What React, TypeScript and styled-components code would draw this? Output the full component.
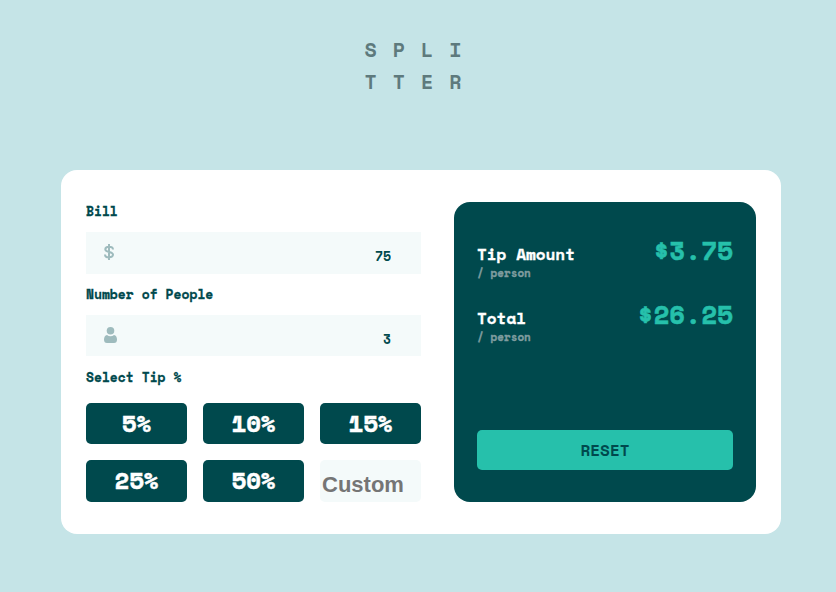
import React, { useState } from "react";
import styled, { createGlobalStyle, css } from "styled-components";

const dark = "#00494d";
const accent = "#26c0ab";
const pale = "#f4fafa";
const mono = '"Space Mono", "DejaVu Sans Mono", monospace';

const heavy = css`
  -webkit-text-stroke: 0.02em currentColor;
`;

const GlobalStyle = createGlobalStyle`
  * { box-sizing: border-box; }
  body {
    margin: 0;
    background: #c5e4e7;
    font-family: ${mono};
    font-weight: 700;
    color: ${dark};
  }
  button, input { font: inherit; }
`;

const Page = styled.div`
  display: flex;
  flex-direction: column;
  align-items: center;
  min-height: 100vh;
  padding: 34px 55px 58px 61px;
`;

const Title = styled.h1`
  margin: 0 0 72px;
  font-size: 20px;
  line-height: 32px;
  letter-spacing: 16px;
  color: #5e7a7d;
`;

const Card = styled.main`
  display: grid;
  grid-template-columns: 335fr 302fr;
  gap: 33px;
  width: 100%;
  max-width: 720px;
  padding: 32px 25px;
  background: #fff;
  border-radius: 16px;
`;

const Form = styled.form`
  display: grid;
  grid-template-rows: 19px 42px 19px 41px 21px auto;
  gap: 11px;
  min-width: 0;
`;

const Label = styled.label`
  align-self: center;
  font-size: 13px;
  line-height: 19px;
  ${heavy}
`;

const Field = styled.div`
  display: flex;
  align-items: center;
  padding: 0 30px 0 18px;
  background: ${pale};

  svg { margin-bottom: 2px; }
`;

const FieldInput = styled.input`
  flex: 1;
  align-self: stretch;
  min-width: 0;
  padding: 6px 0 0;
  border: 0;
  background: none;
  color: ${dark};
  font-size: 13px;
  text-align: right;
  outline: none;
`;

const Options = styled.div`
  display: grid;
  grid-template-columns: repeat(3, minmax(0, 1fr));
  grid-template-rows: 41px 42px;
  gap: 16px;
  margin-top: 4px;
`;

const TipButton = styled.button`
  padding: 0 0 2px;
  border: 0;
  border-radius: 5px;
  background: ${dark};
  color: #fff;
  font-size: 24px;
  line-height: 36px;
  cursor: pointer;
  ${heavy}
`;

const CustomInput = styled.input`
  min-width: 0;
  padding: 8px 2px 0;
  border: 0;
  border-radius: 5px;
  background: ${pale};
  color: ${dark};
  font-family: "Liberation Sans", Arial, sans-serif;
  font-size: 22px;
  outline: none;
  &::placeholder { color: #757575; opacity: 1; }
`;

const Panel = styled.section`
  display: flex;
  flex-direction: column;
  gap: 24px;
  min-width: 0;
  padding: 34px 23px 32px;
  border-radius: 16px;
  background: ${dark};
`;

const ResultRow = styled.div`
  display: flex;
  justify-content: space-between;
  height: 40px;
`;

const ResultName = styled.div`
  padding-top: 7px;
  color: #fff;
  font-size: 16px;
  line-height: 22px;
  ${heavy}
`;

const PerPerson = styled.small`
  display: block;
  color: #7f9c9f;
  font-size: 11px;
  line-height: 16px;
`;

const Amount = styled.output`
  color: ${accent};
  font-size: 26px;
  line-height: 28px;
  ${heavy}
`;

const Reset = styled.button`
  height: 40px;
  margin-top: auto;
  border: 0;
  border-radius: 5px;
  background: ${accent};
  color: ${dark};
  font-size: 16px;
  cursor: pointer;
`;

const DollarIcon = () => (
  <svg width="10" height="16" viewBox="0 0 10 16" fill="none" stroke="#9ebbbd" strokeWidth="2" aria-hidden="true">
    <path d="M5 0v16M9 5.500C9 3.700 7.500 2.700 5 2.700S1.300 3.600 1.300 5.200C1.300 7 2.800 7.400 5 7.900c2.400.5 4 .9 4 2.700 0 1.800-1.500 2.700-4 2.700S1 12.300 1 10.400" />
  </svg>
);

const PersonIcon = () => (
  <svg width="13" height="16" viewBox="0 0 13 16" fill="#9ebbbd" aria-hidden="true">
    <circle cx="6.5" cy="3.8" r="3.8" />
    <path d="M3 8c1 .8 2.200 1.200 3.500 1.200S9 8.800 10 8c2 .4 3 2.300 3 4.400 0 2.200-1 3.600-3 3.600H3c-2 0-3-1.400-3-3.600C0 10.300 1 8.400 3 8z" />
  </svg>
);

const tips = [5, 10, 15, 25, 50];

export default function App() {
  const [bill, setBill] = useState("75");
  const [people, setPeople] = useState("3");
  const [percent, setPercent] = useState(5);
  const [custom, setCustom] = useState("");

  const billValue = Number(bill) || 0;
  const peopleValue = Number(people) || 1;
  const tip = (billValue * percent) / 100;
  const total = (billValue + tip) / peopleValue;

  const reset = () => {
    setBill("");
    setPeople("");
    setPercent(0);
    setCustom("");
  };

  return (
    <>
      <GlobalStyle />
      <Page>
        <Title>SPLI<br />TTER</Title>
        <Card>
          <Form onSubmit={(e) => e.preventDefault()}>
            <Label htmlFor="bill">Bill</Label>
            <Field>
              <DollarIcon />
              <FieldInput id="bill" inputMode="decimal" value={bill} onChange={(e) => setBill(e.target.value)} />
            </Field>
            <Label htmlFor="people">Number of People</Label>
            <Field>
              <PersonIcon />
              <FieldInput id="people" inputMode="numeric" value={people} onChange={(e) => setPeople(e.target.value)} />
            </Field>
            <Label as="span" id="tip-label">Select Tip %</Label>
            <Options role="group" aria-labelledby="tip-label">
              {tips.map((value) => (
                <TipButton key={value} type="button" onClick={() => setPercent(value)}>
                  {value}%
                </TipButton>
              ))}
              <CustomInput
                aria-label="Custom tip"
                placeholder="Custom"
                inputMode="decimal"
                value={custom}
                onChange={(e) => {
                  setCustom(e.target.value);
                  setPercent(Number(e.target.value) || 0);
                }}
              />
            </Options>
          </Form>
          <Panel>
            <ResultRow>
              <ResultName>Tip Amount<PerPerson>/ person</PerPerson></ResultName>
              <Amount>${tip.toFixed(2)}</Amount>
            </ResultRow>
            <ResultRow>
              <ResultName>Total<PerPerson>/ person</PerPerson></ResultName>
              <Amount>${total.toFixed(2)}</Amount>
            </ResultRow>
            <Reset type="button" onClick={reset}>RESET</Reset>
          </Panel>
        </Card>
      </Page>
    </>
  );
}
